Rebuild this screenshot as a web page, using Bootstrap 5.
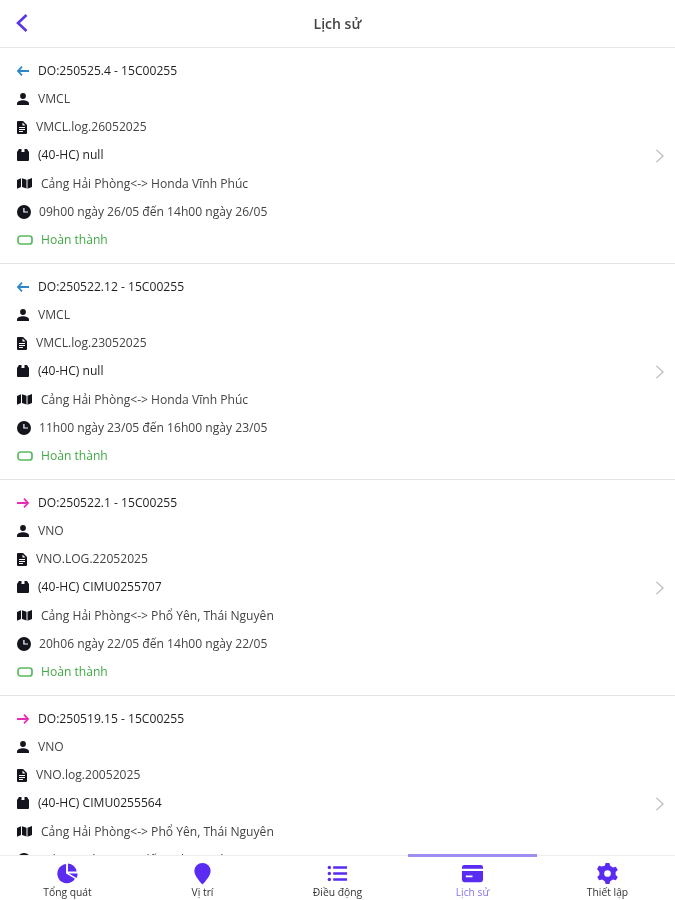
<!DOCTYPE html>
<html lang="vi">
<head>
    <meta charset="UTF-8">
    <meta name="viewport" content="width=device-width, initial-scale=1.0">
    <title>Lịch sử</title>
    <link href="https://cdn.jsdelivr.net/npm/bootstrap@5.3.1/dist/css/bootstrap.min.css" rel="stylesheet">
    <style>
        body { font-family: "Open Sans", "Liberation Sans", sans-serif; color: #3c3c3c; background: #fff; }
        /* the reference is a soft upscaled capture */
        .app-shell { height: 900px; overflow: hidden; filter: blur(.6px); }
        .app-head { height: 48px; border-bottom: 1px solid #e6e6e6; flex: none; }
        .app-title { font-size: 14px; font-weight: 600; color: #444; }
        .back-btn { left: 15px; top: 12px; width: 14px; height: 22px; }
        .trip-list { min-height: 0; overflow: hidden; }
        .trip-item { height: 216px; padding: 0 10px 0 17px; border-bottom: 1px solid #e3e3e3; }
        .trip-body { height: 197.4px; }
        .trip-row { height: 28.2px; font-size: 12.1px; white-space: nowrap; color: #444; }
        .trip-row.strong-row { color: #1e1e1e; }
        .trip-row.done-row { color: #43a948; }
        .ic { flex: none; fill: currentColor; color: #14141c; }
        .ic-in { color: #2b87c9; }
        .ic-out { color: #e92bb5; }
        .ic-done { color: #59b85f; }
        .w-std { width: 21px; }
        .w-file { width: 19px; }
        .w-map { width: 24px; }
        .w-clock { width: 22px; }
        .w-done { width: 24px; }
        .go-arrow { flex: none; color: #c4c4c4; }
        .tab-bar { height: 45px; flex: none; border-top: 1px solid #eee; background: #fff; }
        .tab-item { flex: 1 1 0; font-size: 10.3px; color: #333; padding-top: 6px; line-height: 13px; position: relative; }
        .tab-item svg { fill: #5a2bf0; display: block; margin: 0 auto 1px; }
        .tab-item.on { color: #8b74ee; }
        .tab-item.on::before { content: ""; position: absolute; left: 3px; right: 3px; top: -2px; height: 3px; background: #a08df2; }
    </style>
</head>
<body>
    <svg width="0" height="0" class="position-absolute">
        <symbol id="i-left" viewBox="0 0 12 10"><path d="M5 .6 1 5l4 4.4M1.200 5H12" fill="none" stroke="currentColor" stroke-width="1.800"/></symbol>
        <symbol id="i-right" viewBox="0 0 12 10"><path d="M7 .6 11 5 7 9.400M10.800 5H0" fill="none" stroke="currentColor" stroke-width="1.800"/></symbol>
        <symbol id="i-user" viewBox="0 0 12 12"><circle cx="6" cy="3" r="2.900"/><path d="M0 12v-1.500C0 8.300 3.500 7.200 6 7.200s6 1.100 6 3.300V12z"/></symbol>
        <symbol id="i-file" viewBox="0 0 10 13"><path d="M0 1a1 1 0 0 1 1-1h5l4 4v8a1 1 0 0 1-1 1H1a1 1 0 0 1-1-1zm5.500 .5V4.500h3zM2 6v1h6V6zm0 2v1h6V8zm0 2v1h4v-1z" fill-rule="evenodd"/></symbol>
        <symbol id="i-box" viewBox="0 0 12 12"><path d="M2 0h2.500v3h3V0H10l2 3v8a1 1 0 0 1-1 1H1a1 1 0 0 1-1-1V3z"/></symbol>
        <symbol id="i-map" viewBox="0 0 15 11"><path d="M0 2 4 .3V9L0 10.700zM5 .3 9.500 1.700V10.500L5 9zM10.500 1.700 15 0v9l-4.500 1.700z"/></symbol>
        <symbol id="i-clock" viewBox="0 0 14 14"><path fill-rule="evenodd" d="M7 0a7 7 0 1 1 0 14A7 7 0 0 1 7 0zM6.300 3v4.600H11V6.400H7.500V3z"/></symbol>
        <symbol id="i-done" viewBox="0 0 16 10"><rect x="1" y="1" width="14" height="8" rx="2.500" fill="none" stroke="currentColor" stroke-width="1.700"/></symbol>
        <symbol id="i-chev" viewBox="0 0 10 14"><path d="M1.500 1 8 7l-6.500 6" fill="none" stroke="currentColor" stroke-width="1.500"/></symbol>
    </svg>
    <div class="app-shell d-flex flex-column">
        <header class="app-head position-relative d-flex align-items-center justify-content-center">
            <svg class="back-btn position-absolute" viewBox="0 0 14 22"><path d="M11.500 3 3 11l8.500 8" fill="none" stroke="#5a35e8" stroke-width="2.600"/></svg>
            <span class="app-title">Lịch sử</span>
        </header>
        <div class="trip-list flex-grow-1">
            <div class="trip-item d-flex align-items-center">
                <div class="trip-body flex-grow-1">
                    <div class="trip-row strong-row d-flex align-items-center"><span class="w-std d-flex"><svg class="ic ic-in" width="12" height="10"><use href="#i-left"/></svg></span>DO:250525.4 - 15C00255</div>
                    <div class="trip-row d-flex align-items-center"><span class="w-std d-flex"><svg class="ic" width="12" height="12"><use href="#i-user"/></svg></span>VMCL</div>
                    <div class="trip-row d-flex align-items-center"><span class="w-file d-flex"><svg class="ic" width="10" height="13"><use href="#i-file"/></svg></span>VMCL.log.26052025</div>
                    <div class="trip-row strong-row d-flex align-items-center"><span class="w-std d-flex"><svg class="ic" width="12" height="12"><use href="#i-box"/></svg></span>(40-HC) null</div>
                    <div class="trip-row d-flex align-items-center"><span class="w-map d-flex"><svg class="ic" width="15" height="11"><use href="#i-map"/></svg></span>Cảng Hải Phòng&lt;-&gt; Honda Vĩnh Phúc</div>
                    <div class="trip-row d-flex align-items-center"><span class="w-clock d-flex"><svg class="ic" width="14" height="14"><use href="#i-clock"/></svg></span>09h00 ngày 26/05 đến 14h00 ngày 26/05</div>
                    <div class="trip-row done-row d-flex align-items-center"><span class="w-done d-flex"><svg class="ic ic-done" width="16" height="10"><use href="#i-done"/></svg></span>Hoàn thành</div>
                </div>
                <svg class="go-arrow" width="10" height="14"><use href="#i-chev"/></svg>
            </div>
            <div class="trip-item d-flex align-items-center">
                <div class="trip-body flex-grow-1">
                    <div class="trip-row strong-row d-flex align-items-center"><span class="w-std d-flex"><svg class="ic ic-in" width="12" height="10"><use href="#i-left"/></svg></span>DO:250522.12 - 15C00255</div>
                    <div class="trip-row d-flex align-items-center"><span class="w-std d-flex"><svg class="ic" width="12" height="12"><use href="#i-user"/></svg></span>VMCL</div>
                    <div class="trip-row d-flex align-items-center"><span class="w-file d-flex"><svg class="ic" width="10" height="13"><use href="#i-file"/></svg></span>VMCL.log.23052025</div>
                    <div class="trip-row strong-row d-flex align-items-center"><span class="w-std d-flex"><svg class="ic" width="12" height="12"><use href="#i-box"/></svg></span>(40-HC) null</div>
                    <div class="trip-row d-flex align-items-center"><span class="w-map d-flex"><svg class="ic" width="15" height="11"><use href="#i-map"/></svg></span>Cảng Hải Phòng&lt;-&gt; Honda Vĩnh Phúc</div>
                    <div class="trip-row d-flex align-items-center"><span class="w-clock d-flex"><svg class="ic" width="14" height="14"><use href="#i-clock"/></svg></span>11h00 ngày 23/05 đến 16h00 ngày 23/05</div>
                    <div class="trip-row done-row d-flex align-items-center"><span class="w-done d-flex"><svg class="ic ic-done" width="16" height="10"><use href="#i-done"/></svg></span>Hoàn thành</div>
                </div>
                <svg class="go-arrow" width="10" height="14"><use href="#i-chev"/></svg>
            </div>
            <div class="trip-item d-flex align-items-center">
                <div class="trip-body flex-grow-1">
                    <div class="trip-row strong-row d-flex align-items-center"><span class="w-std d-flex"><svg class="ic ic-out" width="12" height="10"><use href="#i-right"/></svg></span>DO:250522.1 - 15C00255</div>
                    <div class="trip-row d-flex align-items-center"><span class="w-std d-flex"><svg class="ic" width="12" height="12"><use href="#i-user"/></svg></span>VNO</div>
                    <div class="trip-row d-flex align-items-center"><span class="w-file d-flex"><svg class="ic" width="10" height="13"><use href="#i-file"/></svg></span>VNO.LOG.22052025</div>
                    <div class="trip-row strong-row d-flex align-items-center"><span class="w-std d-flex"><svg class="ic" width="12" height="12"><use href="#i-box"/></svg></span>(40-HC) CIMU0255707</div>
                    <div class="trip-row d-flex align-items-center"><span class="w-map d-flex"><svg class="ic" width="15" height="11"><use href="#i-map"/></svg></span>Cảng Hải Phòng&lt;-&gt; Phổ Yên, Thái Nguyên</div>
                    <div class="trip-row d-flex align-items-center"><span class="w-clock d-flex"><svg class="ic" width="14" height="14"><use href="#i-clock"/></svg></span>20h06 ngày 22/05 đến 14h00 ngày 22/05</div>
                    <div class="trip-row done-row d-flex align-items-center"><span class="w-done d-flex"><svg class="ic ic-done" width="16" height="10"><use href="#i-done"/></svg></span>Hoàn thành</div>
                </div>
                <svg class="go-arrow" width="10" height="14"><use href="#i-chev"/></svg>
            </div>
            <div class="trip-item d-flex align-items-center">
                <div class="trip-body flex-grow-1">
                    <div class="trip-row strong-row d-flex align-items-center"><span class="w-std d-flex"><svg class="ic ic-out" width="12" height="10"><use href="#i-right"/></svg></span>DO:250519.15 - 15C00255</div>
                    <div class="trip-row d-flex align-items-center"><span class="w-std d-flex"><svg class="ic" width="12" height="12"><use href="#i-user"/></svg></span>VNO</div>
                    <div class="trip-row d-flex align-items-center"><span class="w-file d-flex"><svg class="ic" width="10" height="13"><use href="#i-file"/></svg></span>VNO.log.20052025</div>
                    <div class="trip-row strong-row d-flex align-items-center"><span class="w-std d-flex"><svg class="ic" width="12" height="12"><use href="#i-box"/></svg></span>(40-HC) CIMU0255564</div>
                    <div class="trip-row d-flex align-items-center"><span class="w-map d-flex"><svg class="ic" width="15" height="11"><use href="#i-map"/></svg></span>Cảng Hải Phòng&lt;-&gt; Phổ Yên, Thái Nguyên</div>
                    <div class="trip-row d-flex align-items-center"><span class="w-clock d-flex"><svg class="ic" width="14" height="14"><use href="#i-clock"/></svg></span>09h00 ngày 20/05 đến 14h00 ngày 20/05</div>
                </div>
                <svg class="go-arrow" width="10" height="14"><use href="#i-chev"/></svg>
            </div>
        </div>
        <nav class="tab-bar d-flex text-center">
            <div class="tab-item">
                <svg width="23" height="23" viewBox="0 0 24 24"><path d="M10.500 2.200A10 10 0 1 0 19.800 17.500L10.500 12zM12.500 1.500V10h9a9.500 9.500 0 0 0-9-8.500zM13.500 12l8 4.700a10 10 0 0 0 1-4.700z"/></svg>
                Tổng quát
            </div>
            <div class="tab-item">
                <svg width="23" height="23" viewBox="0 0 24 24"><path d="M12 1a8.500 8.500 0 0 0-8.500 8.500C3.500 15.500 12 23.500 12 23.500s8.500-8 8.500-14A8.500 8.500 0 0 0 12 1z"/></svg>
                Vị trí
            </div>
            <div class="tab-item">
                <svg width="23" height="23" viewBox="0 0 24 24"><path d="M7.500 4.500H22v2.600H7.500zM7.500 10.700H22v2.600H7.500zM7.500 16.900H22v2.600H7.500z"/><circle cx="3.500" cy="5.800" r="1.800"/><circle cx="3.500" cy="12" r="1.800"/><circle cx="3.500" cy="18.200" r="1.800"/></svg>
                Điều động
            </div>
            <div class="tab-item on">
                <svg width="23" height="23" viewBox="0 0 24 24"><path fill-rule="evenodd" d="M3.500 3h17A2.500 2.500 0 0 1 23 5.500V7H1V5.500A2.500 2.500 0 0 1 3.500 3zM1 9.500h22v9a2.500 2.500 0 0 1-2.500 2.500h-17A2.500 2.500 0 0 1 1 18.500zM5 14v1.800h7V14z"/></svg>
                Lịch sử
            </div>
            <div class="tab-item">
                <svg width="23" height="23" viewBox="0 0 24 24"><path fill-rule="evenodd" d="M10 1h4l.8 3 2.900 1.700 3-.8 2 3.400-2.200 2.200v3l2.200 2.200-2 3.400-3-.8-2.900 1.700-.8 3h-4l-.8-3-2.900-1.700-3 .8-2-3.400 2.200-2.200v-3L1.100 7.300l2-3.400 3 .8L9.200 4zM12 8.500a3.500 3.500 0 1 0 0 7 3.500 3.500 0 0 0 0-7z"/></svg>
                Thiết lập
            </div>
        </nav>
    </div>
    <script src="https://cdn.jsdelivr.net/npm/bootstrap@5.3.1/dist/js/bootstrap.bundle.min.js"></script>
</body>
</html>
